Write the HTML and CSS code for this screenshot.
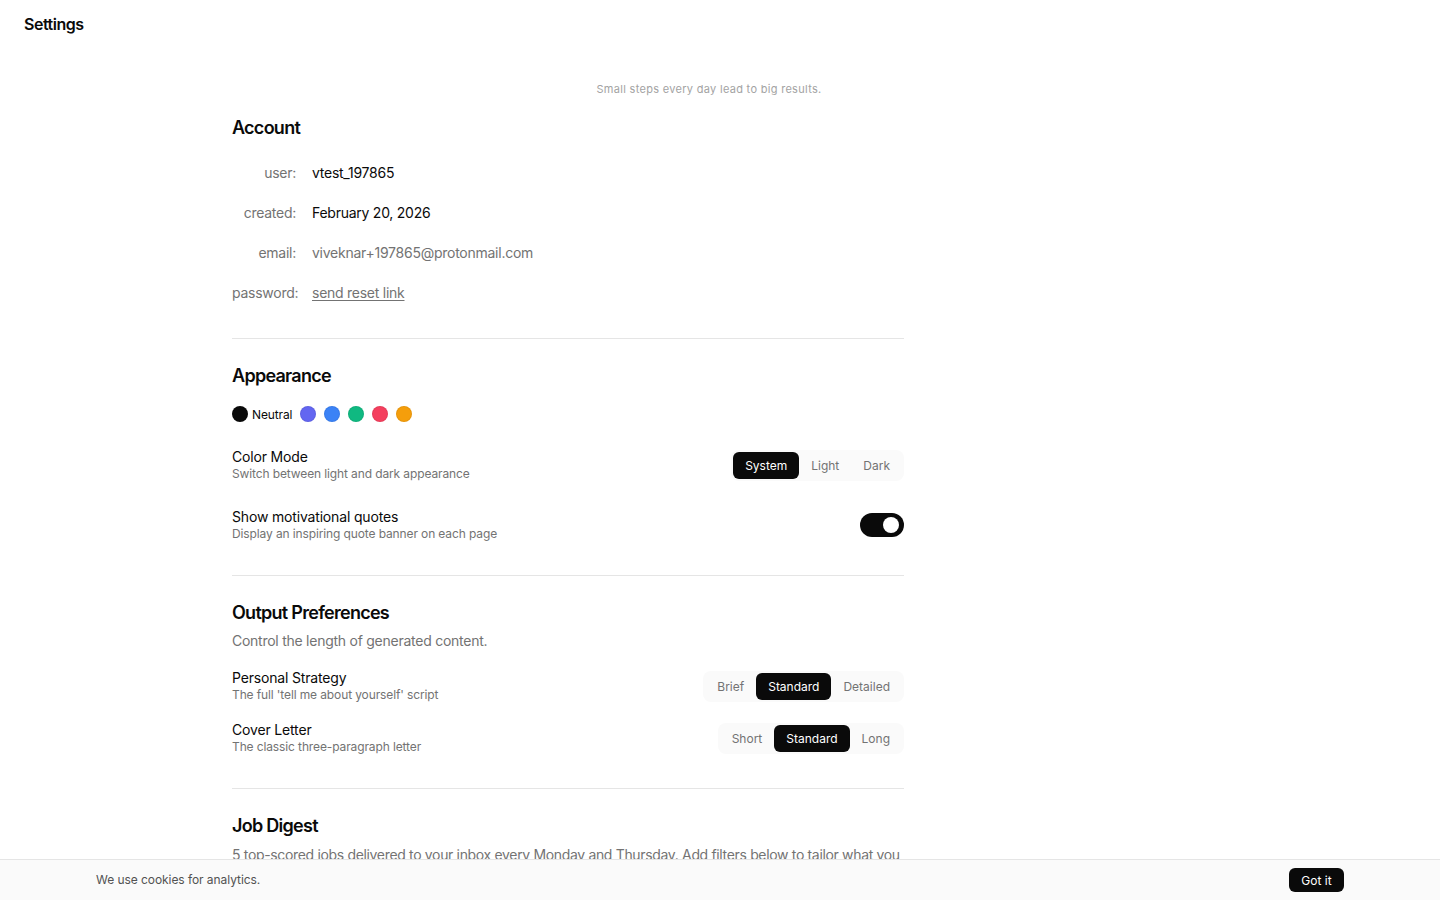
FILE: index.html
```html
<!DOCTYPE html>
<html>
<head>
<meta charset="utf-8">
<link rel="stylesheet" href="styles.css">
</head>
<body>
<div class="page">
<header class="topbar"><h1 class="title">Settings</h1></header>
<p class="quote">Small steps every day lead to big results.</p>
<main class="content">
  <section class="section first">
    <h2 class="heading">Account</h2>
    <dl class="account">
      <div class="arow"><dt>user:</dt><dd class="strong">vtest_197865</dd></div>
      <div class="arow"><dt>created:</dt><dd class="strong">February 20, 2026</dd></div>
      <div class="arow"><dt>email:</dt><dd class="muted">viveknar+197865@protonmail.com</dd></div>
      <div class="arow"><dt>password:</dt><dd><a class="link" href="#">send reset link</a></dd></div>
    </dl>
  </section>
  <section class="section">
    <h2 class="heading">Appearance</h2>
    <div class="swatches">
      <span class="dot dot-black"></span><span class="swlabel">Neutral</span>
      <span class="dot dot-indigo"></span>
      <span class="dot dot-blue"></span>
      <span class="dot dot-green"></span>
      <span class="dot dot-rose"></span>
      <span class="dot dot-amber"></span>
    </div>
    <div class="setting mode">
      <div><div class="stitle">Color Mode</div><div class="sdesc">Switch between light and dark appearance</div></div>
      <div class="seg"><span class="opt active">System</span><span class="opt">Light</span><span class="opt">Dark</span></div>
    </div>
    <div class="setting quotes">
      <div><div class="stitle">Show motivational quotes</div><div class="sdesc">Display an inspiring quote banner on each page</div></div>
      <span class="toggle"><span class="knob"></span></span>
    </div>
  </section>
  <section class="section">
    <h2 class="heading">Output Preferences</h2>
    <p class="intro">Control the length of generated content.</p>
    <div class="setting pref">
      <div><div class="stitle">Personal Strategy</div><div class="sdesc">The full 'tell me about yourself' script</div></div>
      <div class="seg"><span class="opt">Brief</span><span class="opt active">Standard</span><span class="opt">Detailed</span></div>
    </div>
    <div class="setting pref">
      <div><div class="stitle">Cover Letter</div><div class="sdesc">The classic three-paragraph letter</div></div>
      <div class="seg"><span class="opt">Short</span><span class="opt active">Standard</span><span class="opt">Long</span></div>
    </div>
  </section>
  <section class="section last">
    <h2 class="heading">Job Digest</h2>
    <p class="intro">5 top-scored jobs delivered to your inbox every Monday and Thursday. Add filters below to tailor what you receive.</p>
  </section>
</main>
</div>
<div class="cookie">
  <span class="cookietext">We use cookies for analytics.</span>
  <button class="gotit">Got it</button>
</div>
</body>
</html>
```
FILE: styles.css
```css
* { box-sizing: border-box; }
html, body { margin: 0; padding: 0; }
body {
  font-family: Inter, "Noto Sans", sans-serif;
  color: #0a0a0a;
  background: #fff;
  height: 900px;
  overflow: hidden;
  display: flex;
  flex-direction: column;
  letter-spacing: -0.016em;
}
.page { flex: 1; overflow: hidden; min-height: 0; }
.topbar { padding: 14px 24px 0; height: 60px; }
.title { margin: 0; font-size: 16px; font-weight: 600; line-height: 20px; letter-spacing: -0.03em; }
.quote {
  margin: 22px 0 0;
  width: 1418px;
  text-align: center;
  font-size: 11px;
  line-height: 14px;
  color: #a3a3a3;
  letter-spacing: 0.3px;
}
.content { width: 672px; margin: 0 0 0 232px; }
.section { padding: 25px 0 33px; border-bottom: 1px solid #e5e5e5; }
.section.first { padding-top: 20px; padding-bottom: 26px; }
.section.last { border-bottom: 0; padding-bottom: 0; }
.heading { margin: 0; font-size: 18px; font-weight: 600; line-height: 24px; letter-spacing: -0.04em; }
.account { margin: 12px 0 0; padding: 0; }
.arow { display: flex; align-items: center; height: 40px; font-size: 14px; }
.arow dt { width: 64px; text-align: right; color: #737373; margin: 0; }
.arow dd { margin: 0 0 0 16px; }
.strong { color: #0a0a0a; }
.muted { color: #737373; }
.link { color: #737373; text-decoration: underline; text-underline-offset: 2px; }
.swatches { display: flex; align-items: center; margin-top: 18px; height: 16px; }
.dot { width: 16px; height: 16px; border-radius: 50%; display: inline-block; margin-right: 8px; border: 1px solid rgba(0,0,0,0.06); flex: none; }
.dot-black { background: #0a0a0a; margin-right: 4px; }
.swlabel { font-size: 12px; margin-right: 8px; color: #0a0a0a; letter-spacing: -0.01em; }
.dot-indigo { background: #6366f1; }
.dot-blue { background: #3b82f6; }
.dot-green { background: #10b981; }
.dot-rose { background: #f43f5e; }
.dot-amber { background: #f59e0b; }
.setting { display: flex; justify-content: space-between; align-items: center; }
.stitle { font-size: 14px; line-height: 18px; color: #0a0a0a; letter-spacing: -0.012em; }
.sdesc { font-size: 12px; line-height: 16px; color: #737373; letter-spacing: -0.01em; }
.mode { margin-top: 26px; }
.quotes { margin-top: 26px; }
.seg { display: flex; background: #fafafa; border-radius: 8px; padding: 2px; align-items: center; }
.opt { font-size: 12px; color: #737373; padding: 0 12px; line-height: 27px; border-radius: 6px; letter-spacing: 0; }
.opt.active { background: #0a0a0a; color: #fff; }
.toggle { width: 44px; height: 24px; border-radius: 12px; background: #0a0a0a; position: relative; display: inline-block; flex: none; }
.knob { position: absolute; width: 16px; height: 16px; border-radius: 50%; background: #fff; top: 4px; right: 5px; }
.intro { margin: 6px 0 0; font-size: 14px; line-height: 20px; color: #737373; }
.section.last .intro { margin-top: 7px; letter-spacing: -0.024em; }
.pref { margin-top: 18px; }
.cookie {
  flex: none; height: 41px;
  background: #fafafa; border-top: 1px solid #e5e5e5;
  display: flex; align-items: center; justify-content: space-between;
  padding: 0 96px;
}
.cookietext { font-size: 12px; color: #525252; letter-spacing: -0.005em; margin-top: -2px; }
.gotit {
  font-family: Inter, sans-serif; font-size: 12px; color: #fff; background: #0a0a0a;
  border: 0; border-radius: 6px; height: 24px; width: 55px; padding: 0; letter-spacing: 0;
}
```
